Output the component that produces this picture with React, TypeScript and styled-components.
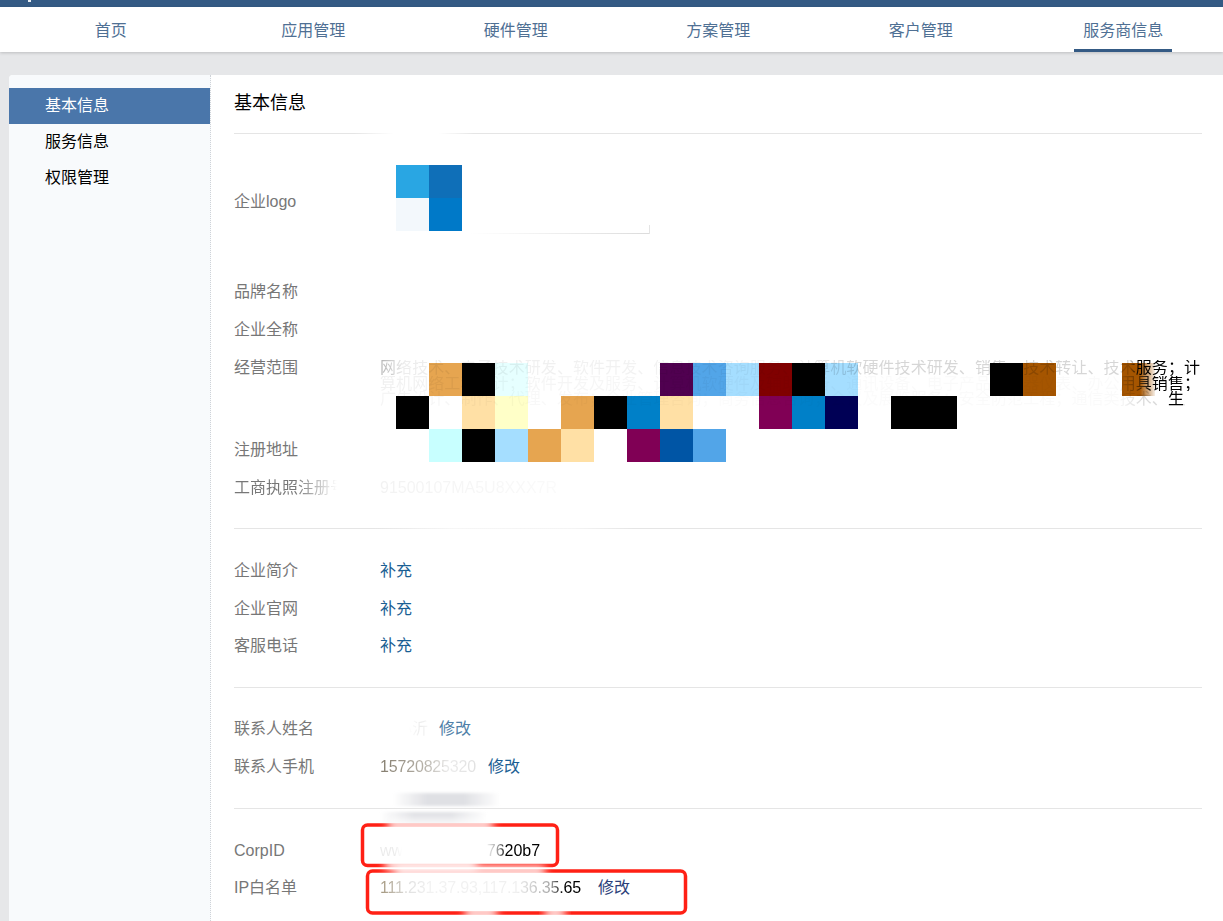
import React from 'react';
import styled, { createGlobalStyle } from 'styled-components';

const Global = createGlobalStyle`
  html, body { margin: 0; padding: 0; height: 921px; overflow: hidden; background: #e6e7e9; }
  body { font-family: "Liberation Sans", "Noto Sans CJK SC", sans-serif; font-size: 16px; }
`;

const Page = styled.div`
  position: relative;
  width: 1223px;
  height: 921px;
  overflow: hidden;
  display: flex;
  flex-direction: column;
`;
const TopBar = styled.div`
  height: 7px;
  background: #345a84;
  flex: none;
  position: relative;
`;
const LogoCrumb = styled.span`
  position: absolute;
  left: 28px;
  top: 0;
  width: 3px;
  height: 2px;
  background: #e8eef4;
`;
const Nav = styled.nav`
  height: 45px;
  flex: none;
  background: #fff;
  box-shadow: 0 1px 3px rgba(0, 0, 0, 0.18);
  display: grid;
  grid-template-columns: repeat(6, 202.5px);
  padding-left: 9.5px;
  position: relative;
`;
const NavItem = styled.a<{ $active?: boolean }>`
  position: relative;
  display: flex;
  align-items: center;
  justify-content: center;
  padding-bottom: 2px;
  color: #4f7094;
  &::after {
    content: '';
    display: ${(p) => (p.$active ? 'block' : 'none')};
    position: absolute;
    left: 52px;
    width: 98px;
    bottom: 0;
    height: 3px;
    background: #345a84;
  }
`;
const Card = styled.div`
  margin: 23px 0 0 9px;
  flex: 1;
  display: flex;
  background: #fff;
  border-top-left-radius: 4px;
  overflow: hidden;
`;
const Sidebar = styled.aside`
  width: 201px;
  flex: none;
  box-sizing: content-box;
  background: #f8fafc;
  border-right: 1px dotted #cfd3d8;
  padding-top: 13px;
`;
const SideItem = styled.div<{ $active?: boolean }>`
  height: 36px;
  line-height: 36px;
  padding-left: 36px;
  color: ${(p) => (p.$active ? '#fff' : '#000')};
  background: ${(p) => (p.$active ? '#4a76aa' : 'transparent')};
`;
const Main = styled.main`
  position: relative;
  z-index: 2;
  flex: none;
  width: 968px;
  padding-left: 23px;
`;
const Title = styled.h1`
  margin: 0;
  height: 58px;
  line-height: 57px;
  font-size: 18px;
  font-weight: normal;
  color: #000;
`;
const Divider = styled.div<{ $fade?: string }>`
  height: 1px;
  background: ${(p) => p.$fade || '#e5e5e5'};
`;
const Section = styled.section<{ $top: number; $bottom: number }>`
  padding: ${(p) => p.$top}px 0 ${(p) => p.$bottom}px;
`;
const Row = styled.div<{ $h?: number }>`
  height: ${(p) => p.$h ?? 38}px;
  display: flex;
  align-items: flex-start;
  line-height: 40px;
  white-space: nowrap;
`;
const LogoRow = styled.div`
  height: 68px;
  display: flex;
  align-items: center;
`;
const Label = styled.div`
  width: 146px;
  flex: none;
  color: #777;
`;
const LogoLabel = styled(Label)`
  line-height: 1;
  margin-top: 2px;
`;
const Value = styled.div`
  display: flex;
  color: #111;
`;
const Faded = styled.span<{ $fade: string; $tight?: boolean }>`
  display: inline-block;
  color: transparent;
  letter-spacing: ${(p) => (p.$tight ? '-0.17px' : 'normal')};
  background-image: ${(p) => p.$fade};
  -webkit-background-clip: text;
  background-clip: text;
`;
const Action = styled.a<{ $gap?: number; $tone?: string }>`
  margin-left: ${(p) => p.$gap ?? 0}px;
  color: ${(p) => p.$tone || '#1b5f94'};
`;
const ScopeLines = styled.div`
  width: 820px;
  padding-top: 12px;
`;
const ScopeLine = styled.div<{ $fade: string }>`
  height: 15.7px;
  line-height: 15.7px;
  text-align: justify;
  text-align-last: justify;
  white-space: nowrap;
  color: transparent;
  background-image: ${(p) => p.$fade};
  -webkit-background-clip: text;
  background-clip: text;
`;
const Overlay = styled.svg`
  position: absolute;
  left: 0;
  top: 0;
  z-index: 1;
  pointer-events: none;
`;
const LogoPic = styled.svg`
  display: block;
  overflow: visible;
`;

const navs = ['首页', '应用管理', '硬件管理', '方案管理', '客户管理', '服务商信息'];
const O = '#e6a550', K = '#000000', W = '#ffe0a5', B = '#0080c8', L = '#a5deff', S = '#52a5e8', M = '#800055', R = '#a55500';
const cells: [number, number, string][] = [
  [429, 363, O], [462, 363, K], [495, 363, '#e6ffff'], [660, 363, '#500050'], [693, 363, S], [726, 363, L],
  [759, 363, '#800000'], [792, 363, K], [825, 363, L], [990, 363, K], [1023, 363, R], [1122, 363, R],
  [396, 396, K], [462, 396, W], [495, 396, '#ffffc8'], [561, 396, O], [594, 396, K], [627, 396, B], [660, 396, W],
  [759, 396, M], [792, 396, B], [825, 396, '#000055'], [891, 396, K], [924, 396, K],
  [429, 429, '#c8ffff'], [462, 429, K], [495, 429, L], [528, 429, O], [561, 429, W], [627, 429, M], [660, 429, '#0055a5'], [693, 429, S],
];

export default function App() {
  return (
    <>
      <Global />
      <Page>
        <TopBar><LogoCrumb /></TopBar>
        <Nav>
          {navs.map((n, i) => (
            <NavItem key={n} $active={i === 5}>{n}</NavItem>
          ))}
        </Nav>
        <Card>
          <Sidebar>
            <SideItem $active>基本信息</SideItem>
            <SideItem>服务信息</SideItem>
            <SideItem>权限管理</SideItem>
          </Sidebar>
          <Main>
            <Title>基本信息</Title>
            <Divider $fade="linear-gradient(90deg,#e5e5e5 0,#e5e5e5 120px,#fff 160px,#fff 205px,#e5e5e5 240px,#e5e5e5 100%)" />
            <Section $top={33} $bottom={37}>
              <LogoRow>
                <LogoLabel>企业logo</LogoLabel>
                <LogoPic width="272" height="68" viewBox="0 0 272 68">
                  <defs>
                    <linearGradient id="lg" x1="0" x2="1" y1="0" y2="0">
                      <stop offset="0" stopColor="#fff" />
                      <stop offset="1" stopColor="#dcdcdc" />
                    </linearGradient>
                  </defs>
                  <rect x="16" y="-2" width="33" height="33" fill="#29a6e3" />
                  <rect x="49" y="-2" width="33" height="33" fill="#0f6fb8" />
                  <rect x="16" y="31" width="33" height="33" fill="#f3f8fc" />
                  <rect x="49" y="31" width="33" height="33" fill="#0079c8" />
                  <rect x="90" y="66" width="180" height="1" fill="url(#lg)" />
                  <rect x="269" y="58" width="1" height="9" fill="#e4e4e4" />
                </LogoPic>
              </LogoRow>
            </Section>
            <Section $top={0} $bottom={22}>
              <Row><Label>品牌名称</Label></Row>
              <Row><Label>企业全称</Label></Row>
              <Row $h={82}>
                <Label>经营范围</Label>
                <ScopeLines>
                  <ScopeLine $fade="linear-gradient(90deg,rgba(0,0,0,.3) 0,rgba(0,0,0,.07) 3%,rgba(0,0,0,.04) 50%,rgba(0,0,0,.16) 58%,rgba(0,0,0,.16) 91.5%,#000 92.5%)">网络技术、电子技术研发、软件开发、信息技术咨询服务、计算机软硬件技术研发、销售、技术转让、技术服务；计</ScopeLine>
                  <ScopeLine $fade="linear-gradient(90deg,rgba(0,0,0,.06) 0,rgba(0,0,0,.04) 20%,rgba(0,0,0,.02) 60%,rgba(0,0,0,.02) 90%,rgba(0,0,0,.3) 92%,#000 94%)">算机网络工程设计；软件开发及服务、计算机软硬件及辅助设备、通讯设备、电子产品、仪器仪表、办公用具销售；</ScopeLine>
                  <ScopeLine $fade="linear-gradient(90deg,rgba(0,0,0,.04) 0,rgba(0,0,0,.015) 40%,rgba(0,0,0,.02) 90%,rgba(0,0,0,.15) 93%,rgba(0,0,0,.15) 95.5%,#000 96%,#000 98%,rgba(0,0,0,0) 98.2%)">广告设计、制作、代理、发布；企业管理咨询；商务信息咨询；会议及展览服务；安全防范工程；通信类技术、生产</ScopeLine>
                </ScopeLines>
              </Row>
              <Row>
                <Label>注册地址</Label>
              </Row>
              <Row>
                <Label>
                  <Faded $fade="linear-gradient(90deg,#777 0,#777 55%,rgba(119,119,119,0) 92%)">工商执照注册号</Faded>
                </Label>
                <Value>
                  <Faded $fade="linear-gradient(90deg,rgba(0,0,0,.05),rgba(0,0,0,.02))">91500107MA5U8XXX7R</Faded>
                </Value>
              </Row>
            </Section>
            <Divider $fade="linear-gradient(90deg,#e5e5e5 0,#e5e5e5 140px,#f6f6f6 220px,#f4f4f4 340px,#e5e5e5 400px,#e5e5e5 100%)" />
            <Section $top={22} $bottom={23.5}>
              <Row $h={37.5}><Label>企业简介</Label><Action>补充</Action></Row>
              <Row $h={37.5}><Label>企业官网</Label><Action>补充</Action></Row>
              <Row $h={37.5}><Label>客服电话</Label><Action>补充</Action></Row>
            </Section>
            <Divider />
            <Section $top={21} $bottom={23}>
              <Row>
                <Label>联系人姓名</Label>
                <Value>
                  <Faded $fade="linear-gradient(90deg,rgba(0,0,0,0) 0,rgba(0,0,0,0) 60%,rgba(0,0,0,.08) 85%,rgba(0,0,0,.03) 100%)">陈小沂</Faded>
                  <Action $gap={11} $tone="#4f7fa8">修改</Action>
                </Value>
              </Row>
              <Row>
                <Label>联系人手机</Label>
                <Value>
                  <Faded $tight $fade="linear-gradient(90deg,rgba(90,80,60,.75) 0,rgba(90,80,60,.45) 45%,rgba(0,0,0,.08) 72%,rgba(0,0,0,.12) 100%)">15720825320</Faded>
                  <Action $gap={12}>修改</Action>
                </Value>
              </Row>
            </Section>
            <Divider />
            <Section $top={22} $bottom={0}>
              <Row $h={37}>
                <Label>CorpID</Label>
                <Value>
                  <Faded $fade="linear-gradient(90deg,rgba(0,0,0,.08) 0,rgba(0,0,0,.08) 9%,rgba(0,0,0,0) 14%,rgba(0,0,0,0) 66%,rgba(0,0,0,.2) 70%,rgba(0,0,0,.5) 75%,#000 79%)">ww3c8a19e5f07620b7</Faded>
                </Value>
              </Row>
              <Row>
                <Label>IP白名单</Label>
                <Value>
                  <Faded $tight $fade="linear-gradient(90deg,rgba(110,90,50,.65) 0,rgba(0,0,0,.12) 14%,rgba(0,0,0,.05) 25%,rgba(0,0,0,.06) 68%,rgba(0,0,0,.35) 85%,#000 91%)">111.231.37.93,117.136.35.65</Faded>
                  <Action $gap={17} $tone="#2b3f7a">修改</Action>
                </Value>
              </Row>
            </Section>
          </Main>
        </Card>
        <Overlay width="1223" height="921" viewBox="0 0 1223 921">
          <defs>
            <filter id="soft" x="-10%" y="-40%" width="120%" height="180%">
              <feGaussianBlur stdDeviation="1.5" />
            </filter>
            <filter id="wipe" x="-30%" y="-200%" width="160%" height="500%">
              <feGaussianBlur stdDeviation="4" />
            </filter>
            <clipPath id="smudgeClip">
              <rect x="360" y="788" width="180" height="37" />
            </clipPath>
            <linearGradient id="brownEdge" x1="0" x2="1" y1="0" y2="0">
              <stop offset="0" stopColor="#fff" stopOpacity="0" />
              <stop offset="1" stopColor="#fff" stopOpacity="0.9" />
            </linearGradient>
            <linearGradient id="smudge" x1="0" x2="1" y1="0" y2="0">
              <stop offset="0" stopColor="#dfe0e4" stopOpacity="0" />
              <stop offset="0.32" stopColor="#dfe0e4" />
              <stop offset="0.66" stopColor="#dfe0e4" />
              <stop offset="1" stopColor="#dfe0e4" stopOpacity="0" />
            </linearGradient>
          </defs>
          {cells.map(([x, y, c]) => (
            <rect key={`${x}-${y}`} x={x} y={y} width="33" height="33" fill={c} />
          ))}
          <rect x="1140" y="363" width="15" height="33" fill="url(#brownEdge)" />
          <g clipPath="url(#smudgeClip)">
            <rect x="393" y="793" width="107" height="13" fill="url(#smudge)" filter="url(#soft)" />
            <rect x="380" y="812" width="107" height="20" fill="url(#smudge)" filter="url(#soft)" />
          </g>
          <rect x="362.5" y="825" width="195" height="40.5" rx="5" fill="none" stroke="#ff2015" strokeWidth="3.5" />
          <rect x="367.5" y="871" width="318" height="42" rx="5" fill="none" stroke="#ff2015" strokeWidth="3.5" />
          <rect x="388" y="820" width="105" height="10" fill="#fff" filter="url(#wipe)" />
          <rect x="385" y="860" width="92" height="10" fill="#fff" filter="url(#wipe)" />
          <rect x="395" y="866" width="150" height="10" fill="#fff" filter="url(#wipe)" />
          <rect x="465" y="908" width="32" height="10" fill="#fff" filter="url(#wipe)" />
          <rect x="545" y="908" width="20" height="10" fill="#fff" filter="url(#wipe)" />
        </Overlay>
      </Page>
    </>
  );
}
